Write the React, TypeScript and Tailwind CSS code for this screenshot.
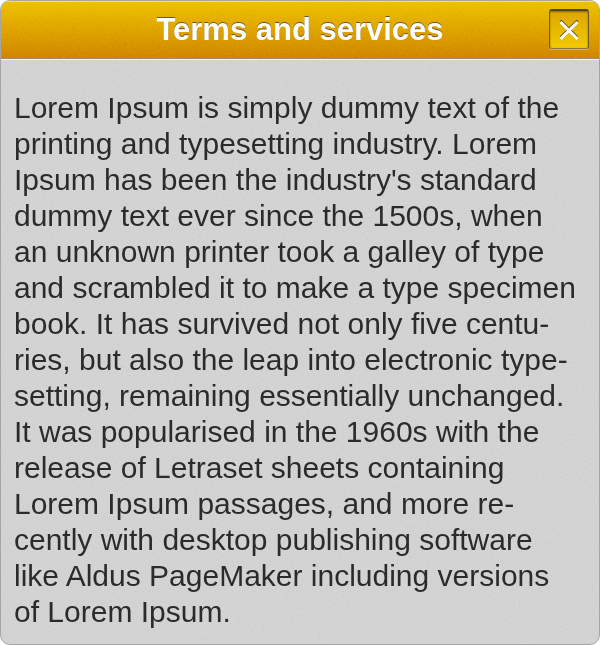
const paragraph: string[] = [
  "Lorem Ipsum is simply dummy text of the",
  "printing and typesetting industry. Lorem",
  "Ipsum has been the industry's standard",
  "dummy text ever since the 1500s, when",
  "an unknown printer took a galley of type",
  "and scrambled it to make a type specimen",
  "book. It has survived not only five centu-",
  "ries, but also the leap into electronic type-",
  "setting, remaining essentially unchanged.",
  "It was popularised in the 1960s with the",
  "release of Letraset sheets containing",
  "Lorem Ipsum passages, and more re-",
  "cently with desktop publishing software",
  "like Aldus PageMaker including versions",
  "of Lorem Ipsum.",
];

// Fine paper grain laid over the panel surfaces, below the text.
function Grain() {
  return (
    <svg
      aria-hidden="true"
      className="pointer-events-none absolute inset-0 h-full w-full opacity-25 mix-blend-soft-light"
    >
      <filter id="grain">
        <feTurbulence type="fractalNoise" baseFrequency="0.5" numOctaves="2" />
        <feColorMatrix
          type="matrix"
          values="1.4 0 0 0 -0.2  1.4 0 0 0 -0.2  1.4 0 0 0 -0.2  0 0 0 0 1"
        />
      </filter>
      <rect width="100%" height="100%" filter="url(#grain)" />
    </svg>
  );
}

function CloseButton() {
  return (
    <button
      type="button"
      aria-label="Close"
      className="relative flex size-10 items-center justify-center justify-self-end rounded-[3px] border border-t-2 border-t-[#51451c] border-r-[#6d5a2b] border-b-[#84734c] border-l-[#6d5a2b] bg-linear-to-b from-[#dca600] to-[#f2ca00] shadow-[inset_0_1px_2px_#8a6800,0_1px_0_#e0b45c]"
    >
      <svg viewBox="0 0 20 20" className="size-5" fill="none" aria-hidden="true">
        <path d="M1.5 0.5 18.5 17.5M18.5 0.5 1.5 17.5" stroke="#5f5133" strokeWidth="2.5" />
        <path d="M1.5 2 18.5 19M18.5 2 1.5 19" stroke="#fff" strokeWidth="3" />
      </svg>
    </button>
  );
}

export default function App() {
  return (
    <div className="bg-white font-['Liberation_Sans',Arial,sans-serif]">
      <section
        aria-labelledby="dialog-title"
        className="relative overflow-hidden rounded-[10px] border border-[#a6a6a6] bg-[#d0d0d0]"
      >
        <Grain />
        <header className="grid h-[58px] grid-cols-[40px_1fr_40px] items-start border-b border-[#96886b] bg-linear-to-b from-[#ecc000] to-[#ce8000] px-[10px] pt-2 shadow-[inset_0_1px_0_#f8dc62,0_1px_0_#f3f3f3]">
          <h1
            id="dialog-title"
            className="relative col-start-2 text-center text-[31px] leading-[42px] font-bold whitespace-nowrap text-white [text-shadow:0_-1px_0_#66573a]"
          >
            Terms and services
          </h1>
          <CloseButton />
        </header>
        <p className="relative px-[13px] pt-[31px] pb-[14px] text-[30px] leading-9 text-[#2b2b2b]">
          {paragraph.map((line) => (
            <span key={line} className="block whitespace-nowrap">
              {line}
            </span>
          ))}
        </p>
      </section>
    </div>
  );
}
